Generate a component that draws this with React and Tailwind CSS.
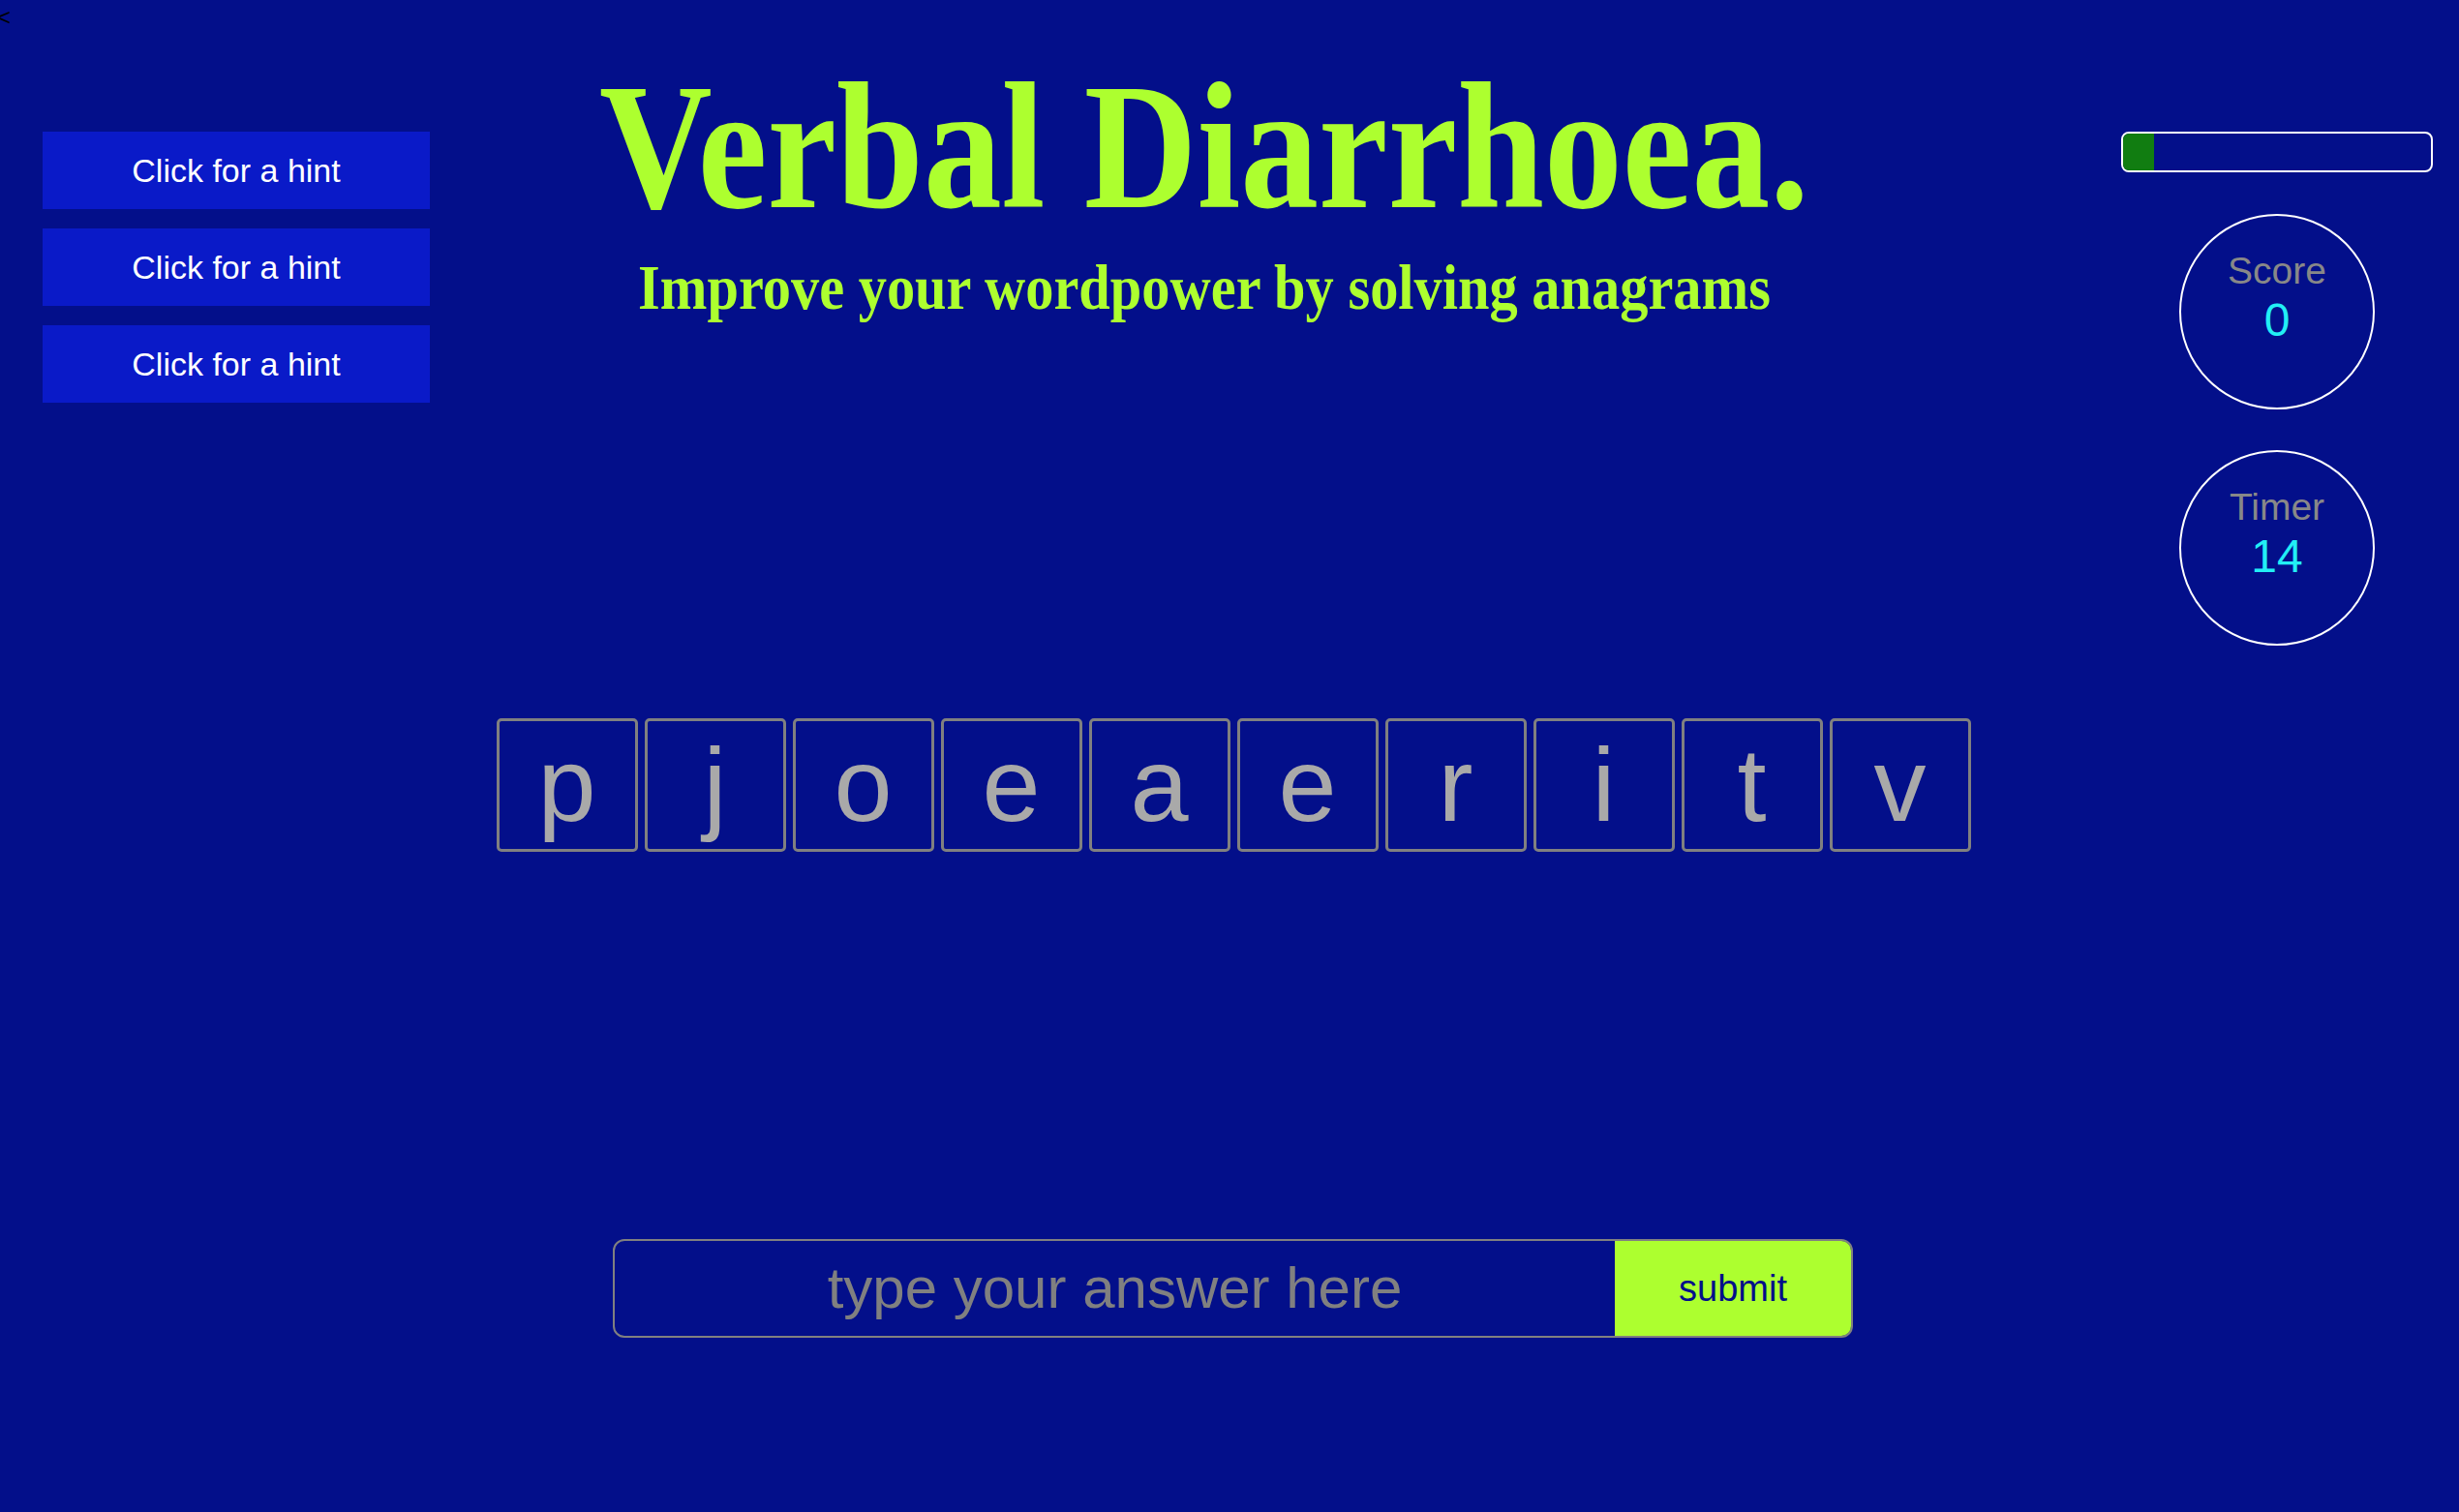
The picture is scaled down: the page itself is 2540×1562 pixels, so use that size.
import { useState } from "react";

const letters = ["p", "j", "o", "e", "a", "e", "r", "i", "t", "v"];

function StatCircle({ label, value }) {
  return (
    <div className="w-[202px] h-[202px] rounded-full border-2 border-white flex flex-col items-center pt-[35px]">
      <span className="text-[39px] text-[#888888] leading-[1.15]">{label}</span>
      <span className="text-[48px] text-[#22eef5] leading-[1.15]">{value}</span>
    </div>
  );
}

export default function App() {
  const [answer, setAnswer] = useState("");
  const progress = 10;

  return (
    <div className="relative min-h-[1562px] bg-[#030f8a] font-['Liberation_Sans',Arial,sans-serif]">
      <span className="absolute left-[-3px] top-0 text-[24px] text-black">&lt;</span>

      {/* top area */}
      <div className="flex items-start">
        {/* hints */}
        <div className="w-[444px] pl-[44px] pt-[136px] flex flex-col gap-5">
          {[0, 1, 2].map((i) => (
            <button
              key={i}
              className="w-[400px] h-[80px] bg-[#0a1ac8] text-white text-[34px]"
            >
              Click for a hint
            </button>
          ))}
        </div>

        {/* heading */}
        <div className="w-[1600px] pt-[58px] text-center text-[#adff2f] font-['Liberation_Serif',serif] font-bold">
          <h1 className="text-[186px] leading-none">
            <span className="inline-block scale-x-[0.868]">Verbal Diarrhoea.</span>
          </h1>
          <p className="mt-[20px] text-[66px] leading-none">
            <span className="inline-block scale-x-[0.885]">
              Improve your wordpower by solving anagrams
            </span>
          </p>
        </div>

        {/* stats */}
        <div className="flex-1 flex justify-end pr-[27px] pt-[136px]">
          <div className="w-[322px] flex flex-col items-center">
            <div className="w-full h-[42px] border-2 border-white rounded-[8px] overflow-hidden">
              <div
                className="h-full bg-[#117d11]"
                style={{ width: `${progress}%` }}
              />
            </div>
            <div className="mt-[43px] flex flex-col gap-[42px]">
              <StatCircle label="Score" value="0" />
              <StatCircle label="Timer" value="14" />
            </div>
          </div>
        </div>
      </div>

      {/* letter tiles */}
      <div className="mt-[75px] flex justify-center gap-[7px] pl-[8px]">
        {letters.map((l, i) => (
          <div
            key={i}
            className="w-[146px] h-[138px] border-[3px] border-[#808080] rounded-[5px] flex items-center justify-center text-[108px] leading-none text-[#a9a9a9]"
          >
            {l}
          </div>
        ))}
      </div>

      {/* answer */}
      <div className="mt-[400px] flex justify-center pl-[7px]">
        <div className="w-[1281px] h-[102px] flex border-2 border-[#808080] rounded-[12px] overflow-hidden">
          <input
            value={answer}
            onChange={(e) => setAnswer(e.target.value)}
            placeholder="type your answer here"
            className="flex-1 bg-transparent text-center text-[60px] text-[#a9a9a9] placeholder:text-[#808080] outline-none"
          />
          <button className="w-[244px] bg-[#adff2f] text-[#030f8a] text-[38px]">
            submit
          </button>
        </div>
      </div>
    </div>
  );
}
